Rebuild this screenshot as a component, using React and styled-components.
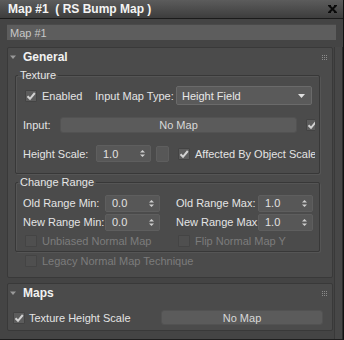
import styled, { createGlobalStyle } from 'styled-components';

const GlobalStyle = createGlobalStyle`
  html, body {
    margin: 0;
    padding: 0;
    background: #444444;
  }
  body {
    font-family: "Liberation Sans", Arial, sans-serif;
    font-size: 11px;
    color: #e2e2e2;
  }
`;

const Window = styled.div`
  width: 344px;
  height: 340px;
  box-sizing: border-box;
  background: #444444;
  border-right: 1px solid #111;
  border-bottom: 1px solid #1e1e1e;
  display: flex;
  flex-direction: column;
  overflow: hidden;
`;

const TitleBar = styled.div`
  height: 19px;
  flex: none;
  box-sizing: border-box;
  padding: 0 6px 0 8px;
  display: flex;
  align-items: center;
  justify-content: space-between;
  background: linear-gradient(#5c5c5c, #3d3d3d);
  border-bottom: 1px solid #1b1b1b;
  color: #f4f4f4;
  font-weight: bold;
  font-size: 12px;
  white-space: pre;
`;

const NameRow = styled.div`
  flex: none;
  padding: 5px 7px 7px 7px;
`;

const NameField = styled.div`
  height: 16px;
  box-sizing: border-box;
  background: #5d5d5d;
  border-top: 1px solid #4a4a4a;
  padding-left: 3px;
  display: flex;
  align-items: center;
  color: #c8c8c8;
`;

const Body = styled.div`
  flex: 1;
  display: flex;
  min-height: 0;
`;

const Column = styled.div`
  width: 326px;
  padding-left: 7px;
  display: flex;
  flex-direction: column;
  gap: 5px;
`;

const ScrollStrip = styled.div`
  flex: 1;
  margin-left: 1px;
  background: #474747;
  border-left: 1px solid #393939;
  border-right: 1px solid #2c2c2c;
`;

const Rollout = styled.div`
  border: 1px solid #393939;
  border-radius: 2px;
  background: #4b4b4b;
`;

const RolloutHeader = styled.div`
  height: 18px;
  display: flex;
  align-items: center;
  padding-left: 2px;
  font-weight: bold;
  font-size: 12px;
  color: #f2f2f2;
  gap: 7px;
`;

const Dots = styled.svg`
  margin-left: auto;
  margin-right: 5px;
`;

const RolloutBody = styled.div`
  padding: ${(p) => p.$pad};
  display: flex;
  flex-direction: column;
`;

const Group = styled.fieldset`
  margin: ${(p) => p.$mt || 0}px 12px 0 7px;
  padding: ${(p) => p.$pt}px 4px ${(p) => p.$pb}px 7px;
  border: 1px solid #383838;
  border-radius: 2px;
  box-shadow: inset 1px 1px 0 #555, 1px 1px 0 #555;
  min-width: 0;
  display: flex;
  flex-direction: column;
  gap: ${(p) => p.$gap}px;
`;

const Legend = styled.legend`
  margin-left: -5px;
  padding: 0 2px;
  line-height: 14px;
  color: #e6e6e6;
`;

const Row = styled.div`
  height: ${(p) => p.$h}px;
  display: flex;
  align-items: center;
  overflow: hidden;
  white-space: nowrap;
`;

const Label = styled.span`
  width: ${(p) => p.$w}px;
  flex: none;
  color: #e4e4e4;
`;

const CheckLabel = styled.label`
  display: flex;
  align-items: center;
  gap: ${(p) => p.$gap || 5}px;
  width: ${(p) => (p.$w ? `${p.$w}px` : 'auto')};
  margin-left: ${(p) => p.$ml || 0}px;
  flex: none;
  color: ${(p) => (p.$disabled ? '#7c7c7c' : '#e4e4e4')};
`;

const Box = styled.span`
  width: 12px;
  height: 12px;
  box-sizing: border-box;
  flex: none;
  display: flex;
  align-items: center;
  justify-content: center;
  border-radius: 1px;
  background: ${(p) => (p.$disabled ? '#4f4f4f' : '#5c5c5c')};
  border: 1px solid ${(p) => (p.$disabled ? '#444' : '#434343')};
`;

const Dropdown = styled.div`
  width: 136px;
  height: 19px;
  box-sizing: border-box;
  background: #5a5a5a;
  border: 1px solid #6a6a6a;
  border-radius: 2px;
  display: flex;
  align-items: center;
  justify-content: space-between;
  padding: 0 6px 0 5px;
  color: #e8e8e8;
`;

const MapButton = styled.div`
  width: ${(p) => p.$w}px;
  height: ${(p) => p.$h}px;
  box-sizing: border-box;
  background: #5b5b5b;
  border: 1px solid #525252;
  border-radius: 3px;
  display: flex;
  align-items: center;
  justify-content: center;
  color: #d8d8d8;
  margin-right: ${(p) => p.$mr || 0}px;
  margin-left: ${(p) => p.$ml || 0};
  flex: none;
`;

const Spinner = styled.div`
  width: 55px;
  height: 17px;
  box-sizing: border-box;
  background: #575757;
  border: 1px solid #5e5e5e;
  border-radius: 2px;
  display: flex;
  align-items: center;
  justify-content: space-between;
  padding: 0 5px 0 6px;
  color: #e2e2e2;
  flex: none;
`;

const SmallBox = styled.div`
  width: 13px;
  height: 16px;
  box-sizing: border-box;
  margin: 0 9px 0 5px;
  background: #575757;
  border: 1px solid #5e5e5e;
  border-radius: 2px;
  flex: none;
`;

const Gap = styled.span`
  width: ${(p) => p.$w}px;
  flex: none;
`;

function Check({ on, disabled }) {
  return (
    <Box $disabled={disabled}>
      {on && (
        <svg width="10" height="10" viewBox="0 0 10 10">
          <path d="M1.5 5.2 L4 7.8 L8.8 2" fill="none" stroke="#d2d2d2" strokeWidth="2" />
        </svg>
      )}
    </Box>
  );
}

function SpinArrows() {
  return (
    <svg width="5" height="9" viewBox="0 0 5 9">
      <path d="M0 3.5 L2.5 1 L5 3.5 Z" fill="#d0d0d0" />
      <path d="M0 5.5 L2.5 8 L5 5.5 Z" fill="#d0d0d0" />
    </svg>
  );
}

function Triangle() {
  return (
    <svg width="6" height="5" viewBox="0 0 6 5">
      <path d="M0 0.5 L6 0.5 L3 4 Z" fill="#9a9a9a" />
    </svg>
  );
}

function DragDots() {
  const dots = [];
  for (let r = 0; r < 3; r++) {
    for (let c = 0; c < 3; c++) {
      dots.push(<rect key={`${r}-${c}`} x={c * 2} y={r * 2} width="1" height="1" fill="#8c8c8c" />);
    }
  }
  return (
    <Dots width="5" height="5" viewBox="0 0 5 5">
      {dots}
    </Dots>
  );
}

export default function App() {
  return (
    <>
      <GlobalStyle />
      <Window>
        <TitleBar>
          <span>Map #1  ( RS Bump Map )</span>
          <svg width="9" height="8" viewBox="0 0 9 8">
            <path d="M1 0.5 L8 7.5 M8 0.5 L1 7.5" stroke="#0a0a0a" strokeWidth="2" />
            <path d="M0 0.5 H3 M6 0.5 H9 M0 7.5 H3 M6 7.5 H9" stroke="#0a0a0a" strokeWidth="1" />
          </svg>
        </TitleBar>
        <NameRow>
          <NameField>Map #1</NameField>
        </NameRow>
        <Body>
          <Column>
            <Rollout>
              <RolloutHeader>
                <Triangle />
                <span>General</span>
                <DragDots />
              </RolloutHeader>
              <RolloutBody $pad="2px 0 7px 0">
                <Group $pt={4} $pb={10} $gap={10}>
                  <Legend>Texture</Legend>
                  <Row $h={19}>
                    <CheckLabel $w={70} $ml={2}>
                      <Check on />
                      Enabled
                    </CheckLabel>
                    <Label $w={81}>Input Map Type:</Label>
                    <Dropdown>
                      <span>Height Field</span>
                      <svg width="7" height="4" viewBox="0 0 7 4">
                        <path d="M0 0 L7 0 L3.5 4 Z" fill="#e0e0e0" />
                      </svg>
                    </Dropdown>
                  </Row>
                  <Row $h={19}>
                    <Label $w={37}>Input:</Label>
                    <MapButton $w={237} $h={16} $mr={9}>No Map</MapButton>
                    <Check on />
                  </Row>
                  <Row $h={19}>
                    <Label $w={73}>Height Scale:</Label>
                    <Spinner>
                      <span>1.0</span>
                      <SpinArrows />
                    </Spinner>
                    <SmallBox />
                    <CheckLabel>
                      <Check on />
                      Affected By Object Scale
                    </CheckLabel>
                  </Row>
                </Group>
                <Group $mt={1} $pt={5} $pb={1} $gap={1}>
                  <Legend>Change Range</Legend>
                  <Row $h={18}>
                    <Label $w={82}>Old Range Min:</Label>
                    <Spinner>
                      <span>0.0</span>
                      <SpinArrows />
                    </Spinner>
                    <Gap $w={16} />
                    <Label $w={82}>Old Range Max:</Label>
                    <Spinner>
                      <span>1.0</span>
                      <SpinArrows />
                    </Spinner>
                  </Row>
                  <Row $h={18}>
                    <Label $w={82}>New Range Min:</Label>
                    <Spinner>
                      <span>0.0</span>
                      <SpinArrows />
                    </Spinner>
                    <Gap $w={16} />
                    <Label $w={82}>New Range Max:</Label>
                    <Spinner>
                      <span>1.0</span>
                      <SpinArrows />
                    </Spinner>
                  </Row>
                  <Row $h={18}>
                    <CheckLabel $w={153} $ml={2} $disabled>
                      <Check disabled />
                      Unbiased Normal Map
                    </CheckLabel>
                    <CheckLabel $disabled>
                      <Check disabled />
                      Flip Normal Map Y
                    </CheckLabel>
                  </Row>
                </Group>
                <Row $h={18}>
                  <CheckLabel $ml={17} $disabled>
                    <Check disabled />
                    Legacy Normal Map Technique
                  </CheckLabel>
                </Row>
              </RolloutBody>
            </Rollout>
            <Rollout>
              <RolloutHeader>
                <Triangle />
                <span>Maps</span>
                <DragDots />
              </RolloutHeader>
              <RolloutBody $pad="8px 9px 5px 5px">
                <Row $h={15}>
                  <CheckLabel $gap={4}>
                    <Check on />
                    Texture Height Scale
                  </CheckLabel>
                  <MapButton $w={162} $h={15} $ml="auto">No Map</MapButton>
                </Row>
              </RolloutBody>
            </Rollout>
          </Column>
          <ScrollStrip />
        </Body>
      </Window>
    </>
  );
}
